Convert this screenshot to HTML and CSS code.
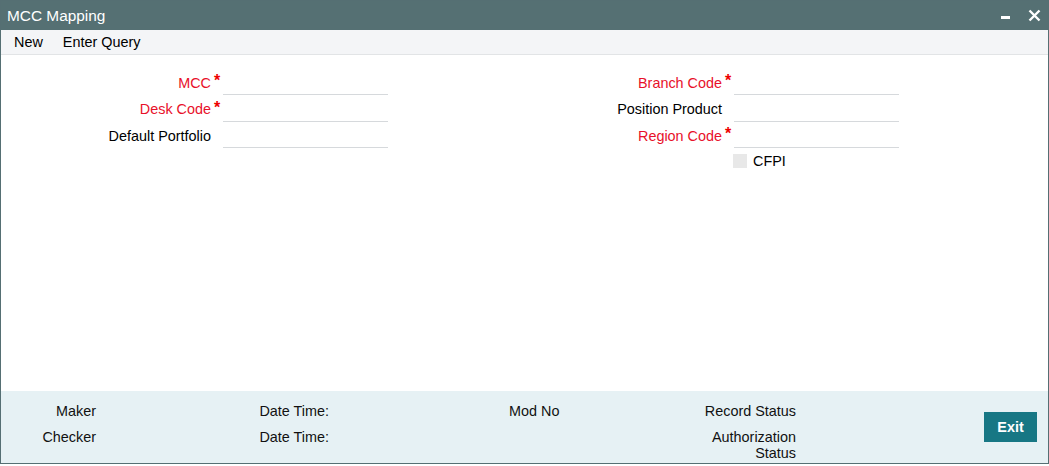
FILE: index.html
```html
<!DOCTYPE html>
<html lang="en">
<head>
    <meta charset="UTF-8">
    <title>MCC Mapping</title>
    <link rel="stylesheet" href="styles.css">
</head>
<body>
    <div class="window">
        <div class="title-bar">
            <div class="title">MCC Mapping</div>
            <div class="win-buttons">
                <span class="win-min"></span>
                <svg class="win-close" width="13" height="13" viewBox="0 0 13 13">
                    <path d="M1.5 1.5 L11.5 11.5 M11.5 1.5 L1.5 11.5" stroke="#fff" stroke-width="2.4" fill="none"/>
                </svg>
            </div>
        </div>

        <div class="toolbar">
            <button class="tool-btn">New</button>
            <button class="tool-btn">Enter Query</button>
        </div>

        <div class="form">
            <div class="form-col">
                <div class="field">
                    <label class="field-label required">MCC</label>
                    <span class="star">*</span>
                    <input class="field-input" type="text">
                </div>
                <div class="field">
                    <label class="field-label required">Desk Code</label>
                    <span class="star">*</span>
                    <input class="field-input" type="text">
                </div>
                <div class="field">
                    <label class="field-label">Default Portfolio</label>
                    <span class="star"></span>
                    <input class="field-input" type="text">
                </div>
            </div>
            <div class="form-col">
                <div class="field">
                    <label class="field-label required">Branch Code</label>
                    <span class="star">*</span>
                    <input class="field-input" type="text">
                </div>
                <div class="field">
                    <label class="field-label">Position Product</label>
                    <span class="star"></span>
                    <input class="field-input" type="text">
                </div>
                <div class="field">
                    <label class="field-label required">Region Code</label>
                    <span class="star">*</span>
                    <input class="field-input" type="text">
                </div>
                <div class="check-row">
                    <span class="check-box"></span>
                    <span class="check-label">CFPI</span>
                </div>
            </div>
        </div>

        <div class="footer">
            <div class="foot-col col-maker">
                <div>Maker</div>
                <div>Checker</div>
            </div>
            <div class="foot-col col-date">
                <div>Date Time:</div>
                <div>Date Time:</div>
            </div>
            <div class="foot-col col-mod">
                <div>Mod No</div>
            </div>
            <div class="foot-col col-status">
                <div>Record Status</div>
                <div>Authorization<br>Status</div>
            </div>
            <button class="exit-btn">Exit</button>
        </div>
    </div>
</body>
</html>
```

FILE: styles.css
```css
* {
    margin: 0;
    padding: 0;
    box-sizing: border-box;
    font-family: "Liberation Sans", Arial, sans-serif;
}

body {
    background-color: #fff;
    color: #000;
    font-size: 14.4px;
}

.window {
    width: 1049px;
    height: 464px;
    border: 1px solid #556f73;
    display: flex;
    flex-direction: column;
    background-color: #fff;
}

.title-bar {
    height: 29px;
    background-color: #557073;
    color: #fff;
    display: flex;
    justify-content: space-between;
    align-items: center;
    padding: 0 7px 0 6px;
    flex-shrink: 0;
}

.title {
    font-size: 15.4px;
}

.win-buttons {
    display: flex;
    align-items: center;
    gap: 18px;
}

.win-min {
    width: 9px;
    height: 3px;
    background-color: #fff;
    margin-top: 3px;
}

.win-close {
    display: block;
}

.toolbar {
    height: 25px;
    background-color: #f4f5f7;
    border-bottom: 1px solid #e2e4e6;
    display: flex;
    align-items: center;
    padding-left: 13px;
    gap: 20px;
    flex-shrink: 0;
}

.tool-btn {
    background: none;
    border: none;
    font-size: 14.4px;
    color: #000;
    cursor: pointer;
}

.form {
    flex-grow: 1;
    display: grid;
    grid-template-columns: 511px 1fr;
    padding: 15px 0 0 10px;
}

.form-col {
    display: flex;
    flex-direction: column;
    gap: 1.5px;
}

.field {
    display: flex;
    align-items: center;
    height: 25px;
}

.field-label {
    width: 200px;
    text-align: right;
    color: #000;
}

.field-label.required {
    color: #e8102a;
}

.star {
    width: 12px;
    color: #e00;
    font-size: 16px;
    font-weight: bold;
    padding-left: 3px;
    align-self: flex-start;
    margin-top: 2px;
}

.field-input {
    width: 165px;
    height: 25px;
    border: none;
    border-bottom: 1px solid #d6d9dc;
    outline: none;
    font-size: 14px;
}

.check-row {
    display: flex;
    align-items: center;
    margin: 4.5px 0 0 211px;
    gap: 6px;
}

.check-box {
    width: 14px;
    height: 14px;
    background-color: #e8e8e8;
}

.check-label {
    line-height: 14px;
}

.footer {
    height: 72px;
    background-color: #e6f1f4;
    display: flex;
    align-items: flex-start;
    padding-top: 12px;
    flex-shrink: 0;
    color: #111;
}

.foot-col {
    display: flex;
    flex-direction: column;
    gap: 10px;
    line-height: 16px;
}

.col-maker {
    width: 95px;
    text-align: right;
}

.col-date {
    width: 100px;
    margin-left: 133px;
    text-align: right;
}

.col-mod {
    margin-left: 180px;
    width: 100px;
}

.col-status {
    width: 187px;
    text-align: right;
}

.exit-btn {
    margin: 9px 11px 0 auto;
    width: 53px;
    height: 30px;
    background-color: #177784;
    color: #fff;
    border: none;
    font-size: 14.4px;
    font-weight: bold;
    cursor: pointer;
}
```
